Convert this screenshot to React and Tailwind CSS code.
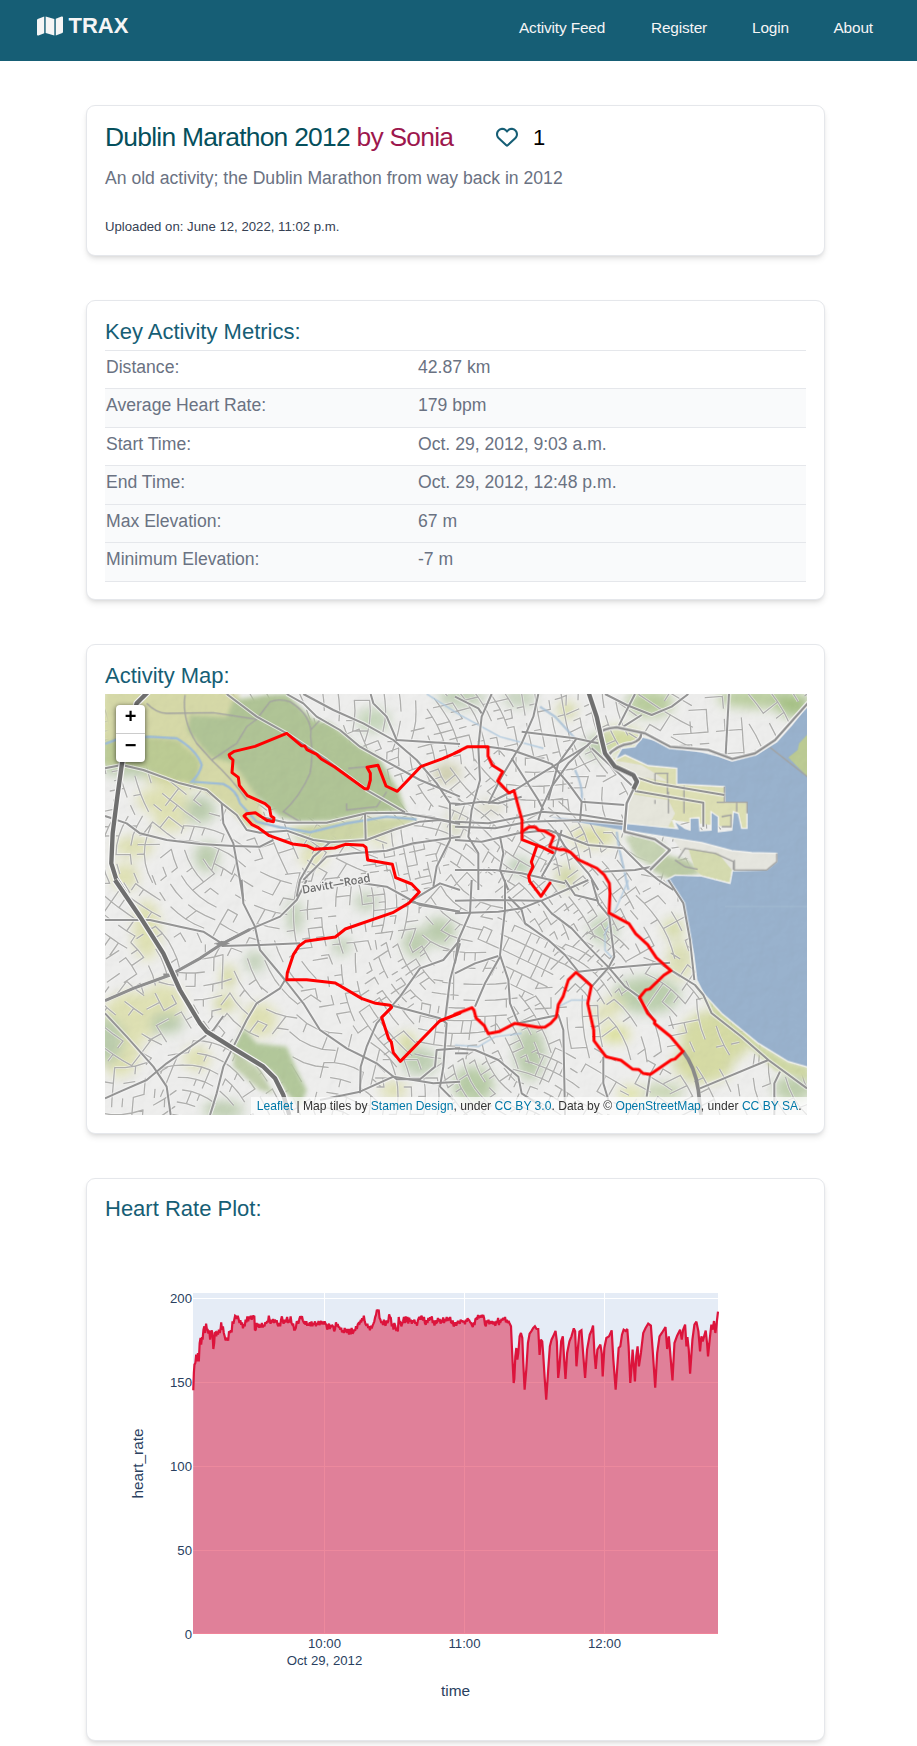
import React from "react";
import { FaMap, FaRegHeart } from "react-icons/fa6";

const NAV = [
  ["Activity Feed", "w-[88px]"],
  ["Register", "w-[57px]"],
  ["Login", "w-[37.5px]"],
  ["About", "w-[40px]"],
];

const METRICS = [
  ["Distance:", "42.87 km", "h-[38px]"],
  ["Average Heart Rate:", "179 bpm", "h-[39px] bg-gray-50"],
  ["Start Time:", "Oct. 29, 2012, 9:03 a.m.", "h-[38px]"],
  ["End Time:", "Oct. 29, 2012, 12:48 p.m.", "h-[39px] bg-gray-50"],
  ["Max Elevation:", "67 m", "h-[38px] bg-gray-50"],
  ["Minimum Elevation:", "-7 m", "h-[39px] bg-gray-50"],
];

// Minor streets: districts, each with its own grid angle and spacing.
function buildStreets() {
  let s = 20121029;
  const rnd = () => {
    s = (s * 1664525 + 1013904223) >>> 0;
    return s / 4294967296;
  };
  const seeds = [];
  for (let gy = 0; gy < 7; gy++) {
    for (let gx = 0; gx < 11; gx++) {
      const x = 15 + (gx + 0.1 + rnd() * 0.8) * 192;
      const y = 162 + (gy + 0.1 + rnd() * 0.8) * 181;
      const central = x > 850 && x < 1500;
      seeds.push({ x, y, a: rnd() * 1.6, g: (central ? 20 : 26) + rnd() * 12, k: central ? 0.6 : 0.48 });
    }
  }
  let d = "";
  seeds.forEach((o) => {
    const c = Math.cos(o.a);
    const n = Math.sin(o.a);
    const bend = (rnd() - 0.5) * 0.006;
    const at = (i, j) => {
      const u = i * o.g;
      const v = j * o.g * 1.5 + bend * u * u;
      return [o.x + u * c - v * n, o.y + u * n + v * c];
    };
    for (let j = -8; j <= 8; j++) {
      for (let i = -10; i <= 10; i++) {
        const p = at(i, j);
        const own = (p[0] - o.x) ** 2 + (p[1] - o.y) ** 2;
        if (seeds.some((q) => q !== o && (p[0] - q.x) ** 2 + (p[1] - q.y) ** 2 < own)) continue;
        const r = at(i + 1, j);
        const t = at(i, j + (rnd() < 0.5 ? 1 : 0.5));
        if (rnd() < o.k + 0.2) d += `M${p[0].toFixed(0)} ${p[1].toFixed(0)}L${r[0].toFixed(0)} ${r[1].toFixed(0)}`;
        if (rnd() < o.k - 0.12) d += `M${p[0].toFixed(0)} ${p[1].toFixed(0)}L${t[0].toFixed(0)} ${t[1].toFixed(0)}`;
      }
    }
  });
  return d;
}
const STREETS = buildStreets();

const NW = "translate(0 0)";
const NE = "translate(1065 0)";
const SW = "translate(0 720)";
const SE = "translate(1065 720)";

const ROADS = [
  [NW, [
    "15,385 65,375 130,390 240,430 320,450 365,490 410,525 440,570 480,578 560,572 640,600 690,607 800,600 880,570 960,545",
    "15,528 80,550 120,580 200,600 300,612 400,618 480,620 520,600",
    "380,162 470,230 560,280 680,360 800,450 915,517",
    "560,162 610,190 650,230 720,270 780,320 860,365 960,420 1080,470",
    "610,162 700,210 790,250 880,300 950,360 1010,430 1050,490 1080,492",
    "812,162 820,190 860,230 890,300 1080,312",
    "480,530 560,548 680,548 800,520 900,518 1000,535 1080,550",
    "365,490 370,550 400,610 420,720 430,780",
    "795,520 797,600",
    "610,720 680,650 760,640 860,632 940,610 1080,590",
    "1050,490 1050,600 1010,680 1000,740",
    "690,607 640,650 600,720 590,770",
    "960,545 1020,540 1080,552",
  ]],
  [NE, [
    "250,162 235,230 200,310 140,410 100,490",
    "110,162 80,230 70,320 75,420 50,510 40,590 70,640 70,750",
    "0,170 70,205 80,220",
    "200,275 360,295 430,310",
    "100,320 170,330 290,372 340,430 380,485 510,495",
    "430,285 340,370 290,440 262,500 250,540",
    "100,490 180,450 260,400 400,315",
    "0,495 80,485 130,490 200,470",
    "0,545 100,550 200,530 260,515 380,525 508,545",
    "0,560 120,565 220,545 380,540 505,552",
    "0,600 80,605 190,580 280,570 400,615 505,625",
    "410,325 535,440",
    "540,162 490,260",
    "450,162 515,195 590,225 650,200 700,162",
    "505,260 560,225",
    "822,162 812,345",
    "365,295 310,370 280,480",
    "170,355 250,480 265,510",
    "300,570 330,620 400,700 430,750",
    "135,590 145,640 135,690 160,750",
    "0,690 120,690 200,700 330,730",
    "440,695 540,690 590,680 645,630",
    "505,625 560,680 610,720 655,750",
    "320,570 300,640 260,710",
    "545,412 600,430 808,465",
    "535,452 745,488 745,560",
    "380,485 375,545",
  ]],
  [SW, [
    "15,120 150,120 240,140 310,155 365,190",
    "15,362 100,325 210,285 300,235 365,192 450,148 540,110 590,60 620,0",
    "365,198 480,195 600,190",
    "425,0 430,70 465,140 480,210 555,300 610,370 660,450 740,505 830,550 890,598 960,598 1005,560 1010,510 1080,505",
    "15,400 80,470 160,560 200,620 212,705",
    "15,655 60,635 140,600 200,550 300,480 340,450",
    "555,300 540,325 470,370 440,420 400,500 370,560 350,640 330,705",
    "340,450 370,408",
    "1080,180 1030,240 960,265 900,350 830,430 800,500 782,560 780,640",
    "1080,30 1020,10 930,65 1080,95",
    "870,375 1020,415 1040,430 1030,560 1020,620 1060,660",
    "720,0 860,20 960,75 1080,95",
    "1080,190 1050,300 1035,420",
    "660,660 780,635 880,590 1000,610 1080,605",
  ]],
  [SE, [
    "0,62 100,60 260,62 400,0",
    "0,100 130,95 200,85 258,62",
    "258,62 290,100 350,145 400,200 461,262 510,320 555,352",
    "160,50 200,90 210,130 280,180 330,225 370,275 461,265 645,248",
    "150,0 150,90 135,225 160,300 165,370 190,430 310,405 325,450 330,705",
    "130,228 60,250 0,280",
    "50,0 45,100 10,180 0,250",
    "135,230 90,310 60,380",
    "410,0 430,70 463,110 470,170 478,230 461,262 410,320",
    "330,0 360,45 430,62",
    "0,505 60,510 130,540 190,590 200,640 260,680",
    "650,272 720,315 745,345 770,400 860,470 940,540 1056,625",
    "550,352 600,425",
    "735,625 940,540",
    "975,575 958,610 958,705",
    "445,530 445,610 460,660",
    "585,585 575,650",
    "640,0 685,70 705,180 718,300",
    "0,520 40,520",
  ]],
];

const MOTORWAYS = [
  [NW, "145,155 110,190 90,270 66,370 52,470 38,580 34,670 48,715 75,757"],
  [SW, "45,0 120,110 190,220 240,330 300,430 320,455 400,505 490,560 525,595 550,645 568,705"],
  [NE, "400,155 425,230 438,290 450,340 480,380 535,405 546,425 535,448"],
];

const ROUTE = [
  [NW, "1080,333 1028,356 962,380 892,454 858,438 834,376 801,382 811,400 811,420 804,446 794,446 704,381 664,357 650,343 621,329 614,318 604,317 560,280 465,319 403,334 387,344 390,352 399,360 396,398 415,412 418,436 442,467 495,491 508,502 513,528 522,534 520,545 500,541 466,518 440,521 432,528 455,553 473,562 508,587 578,612 620,617 643,628 704,624 736,613 790,616 798,622 803,660 877,673 887,713 935,732 958,756 927,789 878,818 736,867 706,891 616,904 597,918 580,944 562,998 560,1019 620,1019 706,1029 786,1076 827,1090 870,1096 875,1102 845,1132 866,1196 874,1206 880,1238 901,1264 1019,1143 1080,1119"],
  [SE, "0,403 51,383 57,391 63,414 88,437 100,461 132,455 179,430 250,442 270,441 287,430 304,411 310,374 324,350 340,300 363,277 409,318 398,370 416,450 417,482 453,530 498,541 532,567 552,569 564,580 586,583 648,540 660,537 684,514 646,469 598,430 600,423 578,400 554,352 572,330 584,327 626,286 648,272 604,233 578,194 542,161 522,131 462,99 465,40 463,10 448,-15 426,-35 370,-61 347,-83 325,-92 315,-91 284,-100 296,-131 268,-147 250,-150 241,-159 221,-159 201,-145"],
  [NE, "0,339 38,320 99,320 99,348 112,376 143,395 128,423 162,459 177,452 190,500 201,540 201,599 246,616 262,622 293,638"],
  [NE, "246,616 229,666 234,680 221,708 224,724 258,769 285,729"],
];

const WATER =
  "560,290 600,300 645,322 740,335 790,348 830,362 905,342 965,305 1010,255 1060,190 1060,1282 1000,1265 910,1210 800,1120 745,1060 725,1020 715,940 700,870 685,800 660,750 630,722 660,705 740,708 825,730 832,692 935,690 965,665 965,640 890,638 830,632 740,608 640,592 512,572 512,550 668,566 655,540 690,565 705,570 705,535 732,533 735,572 768,570 768,515 790,530 790,575 830,570 835,515 850,520 860,565 876,565 876,487 810,487 808,440 665,432 665,385 580,377 510,345 480,360 500,325 540,320";

function Blobs({ items }) {
  return items.map(([cx, cy, rx, ry, fill], i) => <ellipse key={i} cx={cx} cy={cy} rx={rx} ry={ry} fill={fill} />);
}

const Y = "#dfe1b4";
const G = "#bccdae";
const BLOBS = [
  [120, 250, 170, 110, Y], [240, 350, 150, 90, "#d3d79c"], [90, 360, 110, 50, G], [190, 480, 80, 40, Y],
  [210, 540, 50, 35, Y], [300, 510, 45, 40, G], [320, 650, 35, 45, G], [100, 620, 60, 30, Y], [75, 710, 40, 40, Y],
  [140, 870, 40, 90, Y], [640, 650, 40, 30, Y], [1040, 400, 40, 30, "#cfcfae"], [690, 585, 110, 26, "#c3d09a"],
  [840, 600, 30, 16, Y], [820, 240, 50, 35, "#c5d6ba"], [100, 1130, 90, 75, Y], [60, 1230, 60, 80, Y],
  [20, 1200, 50, 70, G], [190, 1090, 60, 60, Y], [200, 1150, 50, 30, G], [375, 1090, 32, 22, "#d3d896"],
  [385, 1010, 18, 35, "#d3d896"], [465, 965, 30, 32, "#c3d2b9"], [800, 785, 36, 26, "#c3d2b9"], [945, 910, 35, 42, G],
  [1020, 875, 46, 42, G], [725, 918, 28, 26, "#c3d2b9"], [585, 830, 25, 50, "#c3d2b9"], [480, 1140, 50, 50, Y],
  [290, 1255, 40, 35, Y], [960, 1265, 55, 40, "#bfd0b4"], [920, 1205, 25, 25, "#d3d896"], [370, 1410, 60, 25, G],
  [880, 1350, 40, 25, Y], [1065, 550, 26, 40, "#d7d9c0"],
  [1085, 170, 70, 35, "#c5d3bb"], [1260, 175, 50, 25, "#c5d3bb"], [1400, 210, 25, 22, "#d3d896"],
  [1650, 190, 70, 40, "#b9cd9d"], [1980, 175, 130, 30, "#b9cd9d"], [2080, 195, 50, 35, "#a6c185"],
  [1560, 300, 70, 38, "#d3dba0"], [1490, 320, 35, 35, G], [1480, 590, 70, 30, "#dcdea6"],
  [1260, 680, 34, 24, "#b9cdb0"], [1400, 710, 30, 35, "#d0d6a4"], [1510, 870, 40, 40, "#c0d2b4"],
  [1640, 1065, 100, 55, "#bccfae"], [1545, 1090, 30, 22, Y], [1510, 1120, 40, 20, Y], [1545, 1183, 45, 24, "#dbe098"],
  [1290, 1240, 45, 80, "#bccdae"], [1120, 1335, 60, 55, "#b8cca6"], [1720, 865, 30, 30, "#d6dca8"],
  [1740, 960, 40, 60, "#dde0b8"], [1590, 1360, 35, 18, "#dbe098"], [1690, 1355, 60, 22, "#c4d3ac"],
  [1850, 1190, 110, 80, "#d6dba5"], [1810, 1270, 90, 60, "#d6dba5"], [2080, 1345, 60, 40, "#bfd0ad"], [1170, 500, 40, 20, "#dddcc8"],
];

function RouteMap() {
  return (
    <svg className="block h-full w-full" viewBox="15 162 2106 1263" preserveAspectRatio="none" aria-hidden="true">
      <defs>
        <filter id="soft" x="-10%" y="-10%" width="120%" height="120%">
          <feGaussianBlur stdDeviation="18" />
        </filter>
        <filter id="edge" x="-5%" y="-5%" width="110%" height="110%">
          <feGaussianBlur stdDeviation="7" />
        </filter>
        <filter id="relief" x="0" y="0" width="100%" height="100%">
          <feTurbulence type="fractalNoise" baseFrequency="0.02" numOctaves="3" seed="4" result="n" />
          <feDiffuseLighting in="n" surfaceScale="8" lightingColor="#ffffff">
            <feDistantLight azimuth="225" elevation="60" />
          </feDiffuseLighting>
        </filter>
      </defs>
      <rect x="15" y="162" width="2106" height="1263" fill="#eeeeed" />
      <g filter="url(#soft)">
        <Blobs items={BLOBS} />
      </g>
      <path d={STREETS} fill="none" stroke="#fafafa" strokeWidth="8" opacity="0.6" />
      <path d={STREETS} fill="none" stroke="#b0b0ae" strokeWidth="4" strokeLinecap="round" />

      <g filter="url(#edge)">
        <polygon points="15,150 340,150 420,162 400,240 500,560 440,560 380,500 300,445 150,385 15,375" fill="#d6d9a8" />
        <polygon points="15,305 130,290 230,300 300,360 290,430 220,420 130,385 15,370" fill="#bccb94" />
        <polygon points="400,180 500,165 560,162 640,240 690,250 780,320 835,350 865,400 895,450 918,512 800,520 690,542 600,545 540,530 470,470 400,370 330,350 262,270 270,225 380,230" fill="#b0c496" />
        <polygon points="560,562 640,560 800,535 950,533 940,545 820,590 700,600 640,592" fill="#cdd5a6" />
        <polygon points="430,1165 470,1210 560,1220 590,1290 620,1350 600,1400 560,1360 520,1300 400,1220" fill="#b3c89b" />
        <polygon points="400,1225 480,1290 520,1360 480,1350 400,1280" fill="#c1cfab" />
        <polygon transform={NE} points="722,1020 800,1120 910,1210 1000,1265 1060,1282 1060,1320 960,1290 860,1200 780,1130 740,1060" fill="#cfd8a5" />
        <polygon transform={NE} points="610,640 700,660 740,700 650,722 590,690" fill="#bccba5" />
        <polygon transform={NE} points="510,590 560,580 630,612 640,640 590,680 540,650" fill="#c6d3b3" />
      </g>
      <g transform={NE}>
        <path d="M512,552L660,565L650,540L810,560L876,565L876,487L810,487L808,440L665,432L665,385L580,377L510,345L455,360L545,420Z" fill="#dddfb4" />
        <path d="M520,460L640,480L660,520L640,560L512,550ZM470,360L560,375L640,425L550,410Z" fill="#e6e6dc" />
        <path d="M650,590L740,606L830,632L965,640L960,668L935,690L838,690L830,700L740,690L690,650Z" fill="#e6e6df" />
        <path d="M700,625L790,640L830,690L825,728L740,706L720,690Z" fill="#d5dbb0" />
        <polygon points={WATER} fill="#99b2cd" stroke="#f3f3f0" strokeWidth="4" />
        <path d="M1060,280L1032,310L1028,330L1000,352L1060,413Z" fill="#bccb94" />
        <path d="M945,322L1060,412" stroke="#a3a3a1" strokeWidth="4" />
        <path d="M838,660L838,690L935,690L965,665V640" fill="none" stroke="#a3a3a1" strokeWidth="4" />
        <path d="M600,400V430M637,400V465M600,400H640M687,437V520M640,455V520M600,480V492M808,440V487H876V520M785,487H845V515M800,530L828,525V560H800M670,655L690,625L780,640L835,665V690M660,660L690,680L728,688" fill="none" stroke="#a3a3a1" strokeWidth="4" />
        <path d="M280,530L380,540L512,550V572L380,548Z" fill="#99b2cd" />
        <path d="M485,575L492,625L505,680L520,750M255,200L300,230L360,295M360,390Q385,440 380,485" fill="none" stroke="#a6bfd6" strokeWidth="7" opacity=".8" />
        <path d="M520,720L490,790L450,880L450,930L478,960M0,1215L70,1220L120,1190L200,1180M310,1100L350,1080L400,1080" fill="none" stroke="#b3cbdf" strokeWidth="5" opacity=".8" />
      </g>
      <path d="M15,312L60,295L150,290L230,295Q290,330 305,375Q300,400 275,425L370,432Q410,450 420,490L470,545L540,562L630,577L740,550L860,530L950,538" fill="none" stroke="#9fbdd6" strokeWidth="7" />
      <path d="M980,162L1080,225L1200,290L1330,325" fill="none" stroke="#b3cbdf" strokeWidth="4" />
      <g fill="none" stroke="#a3a3a1" strokeWidth="4">
        <path d="M255,165Q245,240 290,310L335,360Q400,420 440,480" />
        <path d="M140,190Q170,220 200,220L340,218L470,238L510,185Q540,175 570,185Q640,230 632,290Q640,350 630,400Q600,470 550,515L600,545" />
        <path d="M335,360L410,310L440,260L470,238M632,270L660,240M745,385L800,380M740,490L740,510L830,500L860,455" />
      </g>
      <rect x="15" y="162" width="2106" height="1263" filter="url(#relief)" opacity=".1" style={{ mixBlendMode: "multiply" }} />

      <g fill="none" strokeLinejoin="round">
        {ROADS.map(([t, lines], g) => (
          <g key={g} transform={t}>
            {lines.map((p, i) => <polyline key={i} points={p} stroke="#f7f7f6" strokeWidth="12" opacity=".7" />)}
          </g>
        ))}
        {ROADS.map(([t, lines], g) => (
          <g key={g} transform={t}>
            {lines.map((p, i) => <polyline key={i} points={p} stroke="#949494" strokeWidth="6" />)}
          </g>
        ))}
        <g transform={NE}>
          <path d="M430,285Q440,265 485,262L570,280L645,320L760,330L832,357L900,340L960,300L1060,188M535,448L515,490L508,575L600,598L645,630L585,690M455,352Q480,315 530,310Q560,300 558,282" stroke="#f7f7f6" strokeWidth="14" />
          <path d="M430,285Q440,265 485,262L570,280L645,320L760,330L832,357L900,340L960,300L1060,188M535,448L515,490L508,575L600,598L645,630L585,690M455,352Q480,315 530,310Q560,300 558,282" stroke="#919191" strokeWidth="7" />
          <path d="M684,1234Q720,1280 730,1350L738,1425" stroke="#8a8a8a" strokeWidth="11" />
        </g>
        <path d="M15,1082L100,1045L210,1005L300,955L365,912L450,868M190,1005H235" stroke="#8f8f8f" strokeWidth="9" />
        <path d="M345,912L365,902L390,910L368,920Z" fill="#8f8f8f" stroke="none" />
        {MOTORWAYS.map(([t, p]) => (
          <g key={p} transform={t}>
            <polyline points={p} stroke="#f7f7f6" strokeWidth="20" />
            <polyline points={p} stroke="#6f6f6f" strokeWidth="13" />
          </g>
        ))}
        <path transform={SE} d="M810,79H1060" stroke="#a9bfd5" strokeWidth="2" />
      </g>

      <text transform="translate(608 761) rotate(-10)" fontSize="34" fontWeight="600" textLength="208" fill="#6b6b6b" stroke="#efefee" strokeWidth="8" paintOrder="stroke" fontFamily="'Open Sans', sans-serif">
        Davitt—Road
      </text>

      <g fill="none" stroke="#ff0000" strokeWidth="9" strokeLinejoin="round" strokeLinecap="round">
        {ROUTE.map(([t, p]) => <polyline key={p} transform={t} points={p} />)}
      </g>
    </svg>
  );
}

// Trace points, three units to a pixel, origin at the plot's top left corner.
const HR =
  "1,292 3,240 5,215 8,210 11,185 14,205 17,180 20,205 23,150 26,135 28,155 31,132 33,140 36,110 39,100 42,120 45,92 48,110 50,108 53,122 56,112 59,140 62,118 65,112 68,135 70,168 73,150 75,120 78,118 80,130 83,115 86,125 89,110 92,120 95,108 97,88 100,110 103,100 106,120 109,130 112,142 115,138 118,135 121,143 124,115 127,120 130,112 133,118 136,85 139,92 142,80 145,68 148,70 151,78 154,68 157,78 160,90 163,82 166,95 169,88 172,106 175,94 178,100 181,80 184,88 187,70 190,85 193,70 196,78 199,68 202,80 205,68 208,72 211,68 213,112 216,110 219,90 222,102 225,92 228,104 231,95 234,103 237,90 240,103 243,96 246,100 249,88 252,92 255,84 258,88 261,68 264,82 267,92 270,80 273,88 276,78 279,90 282,80 285,88 288,82 291,95 294,100 297,90 300,100 303,80 306,70 309,85 312,92 315,80 318,88 321,82 324,72 327,90 330,80 333,88 336,70 339,90 342,95 345,92 348,110 351,110 354,105 357,85 360,88 363,92 366,78 369,70 372,74 375,70 378,82 381,88 384,85 387,95 390,85 393,98 396,92 399,98 402,88 405,100 408,85 411,100 414,90 417,94 420,85 423,100 426,90 429,95 432,84 435,96 438,90 441,84 444,94 447,86 450,94 453,85 456,92 459,96 462,110 465,98 468,92 471,108 474,97 477,100 480,98 483,102 486,115 489,108 492,88 495,100 498,93 501,102 504,103 507,110 510,104 513,118 516,112 519,120 522,105 525,118 528,108 531,120 534,108 537,125 540,108 543,124 546,105 549,122 552,118 555,110 558,113 561,100 564,108 567,94 570,90 573,92 576,85 579,88 582,76 585,82 588,68 591,85 594,94 597,98 600,92 603,105 606,100 609,112 612,98 615,106 618,98 621,92 624,85 627,72 630,65 633,50 636,55 639,50 642,75 645,80 648,90 651,86 654,96 657,80 660,94 663,98 666,82 669,90 672,85 675,64 678,72 681,75 684,100 687,92 690,110 693,90 696,98 699,110 702,108 705,115 708,72 711,90 714,88 717,100 720,92 723,85 726,72 729,90 732,70 735,88 738,72 741,92 744,74 747,86 750,80 753,92 756,82 759,88 762,80 765,92 768,88 771,98 774,82 777,75 780,72 783,80 786,68 789,74 792,82 795,72 798,90 801,95 804,82 807,90 810,75 813,83 816,73 819,80 822,70 825,90 828,82 831,98 834,82 837,90 840,88 843,75 846,85 849,78 852,92 855,80 858,88 861,73 864,90 867,78 870,85 873,72 876,84 879,74 882,82 885,72 888,88 891,90 894,82 897,100 900,96 903,88 906,98 909,90 912,84 915,88 918,92 921,80 924,86 927,82 930,88 933,84 936,94 939,80 942,86 945,76 948,80 951,82 954,88 957,90 960,97 963,102 966,88 969,96 972,78 975,76 978,80 981,66 984,75 987,68 990,74 993,66 996,70 999,66 1002,76 1005,95 1008,100 1011,82 1014,90 1017,80 1020,94 1023,84 1026,92 1029,84 1032,94 1035,86 1038,94 1041,98 1044,84 1047,90 1050,75 1053,96 1056,82 1059,85 1062,78 1065,82 1068,75 1071,80 1074,72 1077,88 1080,80 1083,90 1086,84 1089,90 1091,100 1095,190 1099,270 1101,258 1104,190 1107,165 1110,200 1113,180 1117,130 1121,120 1125,135 1128,210 1132,290 1137,230 1142,150 1147,122 1152,115 1158,105 1163,100 1168,108 1173,108 1177,186 1181,140 1185,145 1188,185 1192,250 1197,320 1203,230 1208,160 1213,140 1218,130 1225,114 1229,145 1233,255 1237,220 1242,145 1247,130 1251,200 1255,258 1260,180 1267,145 1273,130 1280,106 1284,115 1288,220 1292,170 1297,116 1303,112 1308,180 1314,255 1320,170 1328,125 1334,112 1338,98 1342,180 1346,228 1351,170 1360,155 1364,180 1367,250 1372,165 1378,135 1386,130 1394,112 1399,200 1406,290 1411,220 1415,165 1420,160 1425,125 1430,110 1436,114 1441,108 1445,160 1450,270 1454,220 1457,170 1460,210 1464,265 1468,190 1472,160 1476,220 1482,180 1489,120 1496,105 1504,92 1512,98 1518,180 1525,284 1531,180 1538,130 1545,120 1556,102 1561,168 1566,130 1571,190 1577,262 1583,150 1591,128 1600,110 1605,140 1609,110 1615,95 1619,160 1622,132 1626,170 1630,242 1637,140 1643,95 1649,86 1655,115 1660,175 1664,130 1668,145 1677,113 1681,150 1684,190 1689,140 1694,95 1698,110 1702,84 1706,120 1710,90 1714,56";
// The second half of the trace above is measured on a wider scale; both halves share one time axis.
const TRACE = HR.split(" ")
  .map((p) => p.split(",").map(Number))
  .map(([x, y]) => {
    if (x < 1091) return [193 + (x * 317) / 1091, 1293 + y / 3];
    return [455 + (168 + ((x - 1091) * 621) / 623) / 3, 1293 + y / 3];
  });

function HeartRateChart() {
  const pts = TRACE.map(([x, y]) => `${x.toFixed(2)},${y.toFixed(2)}`).join(" ");
  return (
    <svg className="block h-[500px] w-[702px]" viewBox="105 1222 702 500" role="img" aria-label="heart rate over time" fontFamily="'Liberation Sans', Arial, sans-serif" fill="#2a3f5f">
      <rect x="193" y="1293" width="525" height="341" fill="#e5ecf6" />
      <g stroke="#fff" strokeWidth="1">
        <path d="M324.5 1293V1634M464.5 1293V1634M604.5 1293V1634M193 1298.5H718M193 1382.5H718M193 1466.5H718M193 1550.5H718" />
      </g>
      <polygon points={`193,1634 ${pts} 718,1634`} fill="#dc143c" fillOpacity=".5" />
      <path d="M193 1633.5H718" stroke="#f08499" />
      <polyline points={pts} fill="none" stroke="#dc143c" strokeWidth="2.2" strokeLinejoin="miter" strokeMiterlimit="2" />
      <g fontSize="13.2" textAnchor="end">
        <text x="192" y="1303">200</text>
        <text x="192" y="1387">150</text>
        <text x="192" y="1471">100</text>
        <text x="192" y="1555">50</text>
        <text x="192" y="1639">0</text>
      </g>
      <g fontSize="13.2" textAnchor="middle">
        <text x="324.5" y="1648">10:00</text>
        <text x="324.5" y="1665">Oct 29, 2012</text>
        <text x="464.5" y="1648">11:00</text>
        <text x="604.5" y="1648">12:00</text>
      </g>
      <g fontSize="15.4" textAnchor="middle">
        <text x="455.5" y="1696">time</text>
        <text transform="translate(143 1463.5) rotate(-90)">heart_rate</text>
      </g>
    </svg>
  );
}

function Card({ className, children }) {
  return (
    <section className={`w-[739px] rounded-[9px] border border-gray-200 bg-white px-[18px] pt-[18px] shadow-md ${className}`}>
      {children}
    </section>
  );
}

function CardTitle({ children }) {
  return <h2 className="text-[22px] leading-[25px] text-[#165e75]">{children}</h2>;
}

function MapLink({ children }) {
  return <a href="#" className="text-[#0078a8]">{children}</a>;
}

export default function App() {
  return (
    <div className="h-[1746px] overflow-hidden bg-white font-['Liberation_Sans',Arial,sans-serif]">
      <header className="flex h-[61px] items-start justify-between bg-[#165e75] pl-[37px] pr-[43.5px] text-[#f5f5f5]">
        <a href="#" className="flex h-[52px] items-center gap-[5.5px] text-[22px] font-bold leading-[26px]">
          <FaMap className="h-[22px] w-[26px]" preserveAspectRatio="none" />
          TRAX
        </a>
        <nav className="flex h-[56px] items-center gap-[44px] text-[15.4px] tracking-[-0.01em]">
          {NAV.map(([n, width]) => <a key={n} href="#" className={`whitespace-nowrap ${width}`}>{n}</a>)}
        </nav>
      </header>

      <main className="flex flex-col gap-[44px] pl-[86px] pt-[44px]">
        <Card className="h-[151px]">
          <div className="flex h-[26px] items-center">
            <h1 className="w-[391px] whitespace-nowrap text-[26.4px] leading-[26px] tracking-[-0.028em] text-[#054f5c]">
              Dublin Marathon 2012 <span className="text-[#9d174d]">by Sonia</span>
            </h1>
            <FaRegHeart className="h-[22px] w-[22px] text-[#165e75]" />
            <span className="ml-[15px] pt-[2px] text-[22px] leading-[26px] text-black">1</span>
          </div>
          <p className="mt-[14px] text-[17.6px] leading-[28px] text-gray-500">
            An old activity; the Dublin Marathon from way back in 2012
          </p>
          <p className="mt-[24px] text-[13.2px] leading-[21px] text-gray-700">Uploaded on: June 12, 2022, 11:02 p.m.</p>
        </Card>

        <Card className="h-[300px]">
          <CardTitle>Key Activity Metrics:</CardTitle>
          <div className="mt-[6px] border-t border-gray-200 text-[17.6px] leading-[32px] text-gray-500">
            {METRICS.map(([label, value, row]) => (
              <div key={label} className={`flex border-b border-gray-200 ${row}`}>
                <div className="w-[312px] pl-px">{label}</div>
                <div className="pl-px">{value}</div>
              </div>
            ))}
          </div>
        </Card>

        <Card className="h-[490px]">
          <CardTitle>Activity Map:</CardTitle>
          <div className="relative mt-[6px] h-[421px] w-[702px] overflow-hidden">
            <RouteMap />
            <div className="absolute left-[11px] top-[11px] flex w-[29px] flex-col overflow-hidden rounded-[4px] bg-white text-center text-[20px] font-bold text-black shadow-[0_1px_5px_rgba(0,0,0,0.65)]">
              <button className="flex h-[29px] items-start justify-center border-b border-[#ccc] leading-[22px]">+</button>
              <button className="flex h-[28px] items-start justify-center leading-[22px]">−</button>
            </div>
            <div className="absolute bottom-0 right-0 h-[18px] whitespace-nowrap bg-white/70 px-[5.5px] text-[12.1px] leading-[18px] text-[#333]">
              <MapLink>Leaflet</MapLink> | Map tiles by <MapLink>Stamen Design</MapLink>, under <MapLink>CC BY 3.0</MapLink>. Data by ©{" "}
              <MapLink>OpenStreetMap</MapLink>, under <MapLink>CC BY SA</MapLink>.
            </div>
          </div>
        </Card>

        <Card className="h-[563px]">
          <div className="-mt-px">
            <CardTitle>Heart Rate Plot:</CardTitle>
          </div>
          <div className="mt-px">
            <HeartRateChart />
          </div>
        </Card>
      </main>
    </div>
  );
}
